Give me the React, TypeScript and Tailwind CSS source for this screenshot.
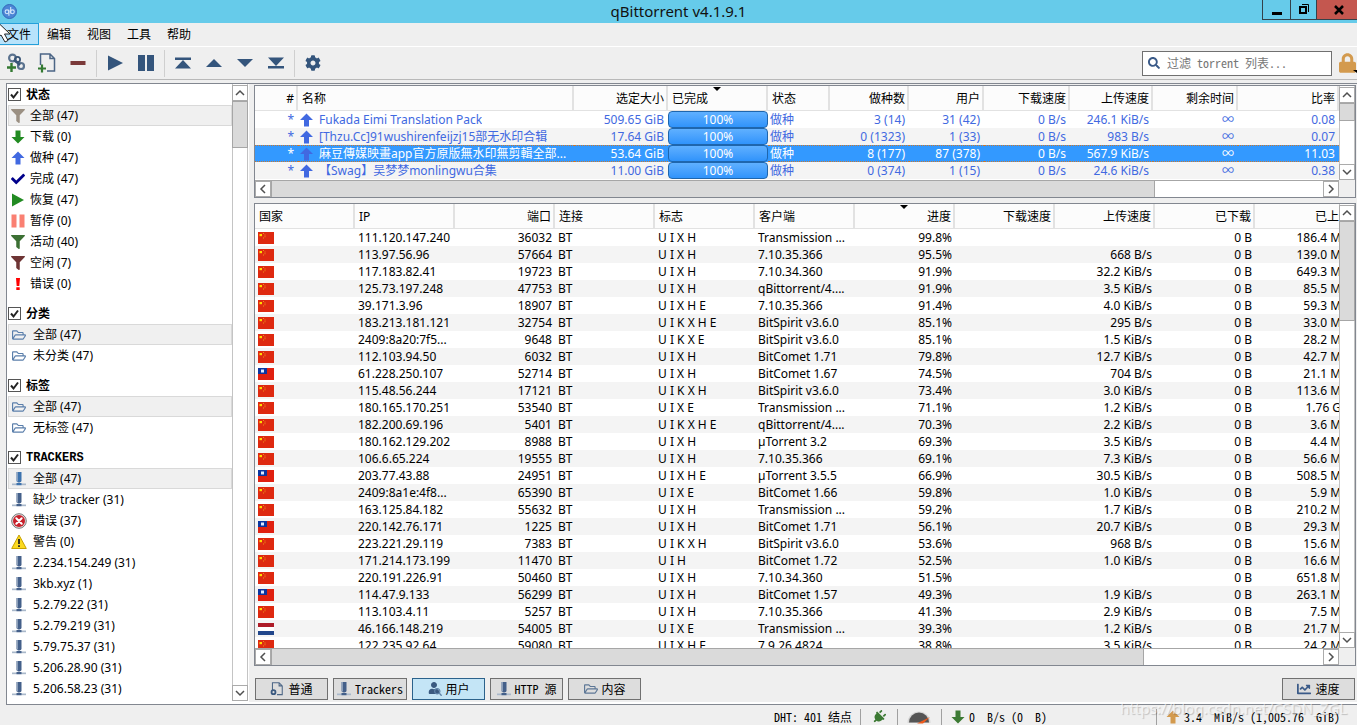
import React from "react";
import { FaCheck, FaCog, FaFilter, FaLock, FaPlug, FaRegFolderOpen, FaSearch, FaUser, FaChartLine } from "react-icons/fa";

const SANS = "font-['Noto_Sans','Noto_Sans_CJK_SC',sans-serif]";
const MONO = "font-['Noto_Sans_Mono_CJK_SC','Liberation_Mono','Noto_Sans_CJK_SC',monospace]";

/* ---------- icons ---------- */

function ArrowIcon({ down = false, className = "" }: { down?: boolean; className?: string }) {
  return (
    <svg viewBox="0 0 13 14" className={"shrink-0 " + className} fill="currentColor" aria-hidden="true">
      {down ? <path d="M4 .5h5V7h4l-6.5 6.5L0 7h4z" /> : <path d="M4 13.5h5V7h4L6.500 .5 0 7h4z" />}
    </svg>
  );
}

function TrackerIcon({ className = "text-[#44608a]" }: { className?: string }) {
  return (
    <svg viewBox="0 0 14 14" className={"h-3.5 w-3.5 shrink-0 " + className} aria-hidden="true">
      <path d="M4.500 0h5v9a2.500 1.500 0 0 1-5 0z" fill="currentColor" />
      <path d="M4.500 0h1.300v9.800L4.500 9z" fill="#9fb0c6" />
      <path d="M6.500 10h1v2h-1z" fill="#8fa2bb" />
      <path d="M0 11.500h14v1.700H0z" fill="#a9b8ca" />
      <path d="M4.500 11h5v2.200h-5z" fill="currentColor" />
    </svg>
  );
}

function PageIcon({ badge }: { badge: "plus" | "gear" }) {
  return (
    <span className="relative block h-full w-full">
      <svg viewBox="0 0 18 20" className="h-full w-full" aria-hidden="true">
        <path d="M2.500 12V1H12l4.500 4.500V18H9M12 1v4.500h4.500" fill="none" stroke="#4c6686" strokeWidth="1.500" />
        {badge === "plus" && <path d="M0 15.500h8M4 11.500v8" stroke="#347a32" strokeWidth="2.200" />}
        {badge === "gear" && <circle cx="4" cy="14.500" r="2.800" fill="none" stroke="#3b5a80" strokeWidth="2.600" />}
      </svg>
    </span>
  );
}

function LinkAddIcon() {
  return (
    <svg viewBox="0 0 18 20" className="h-5 w-[18px]" fill="none" aria-hidden="true">
      <circle cx="5.500" cy="5" r="3.400" stroke="#5b738f" strokeWidth="2.200" />
      <circle cx="14" cy="13" r="3" stroke="#5b738f" strokeWidth="2.200" />
      <circle cx="10.500" cy="6.500" r="2.600" stroke="#3a5677" strokeWidth="1.800" />
      <path d="M7 6.500l6 5.500" stroke="#3a5677" strokeWidth="2.400" />
      <path d="M0 14.500h9M4.500 10v9" stroke="#347a32" strokeWidth="2.400" />
    </svg>
  );
}

function ErrorIcon() {
  return (
    <svg viewBox="0 0 16 16" className="h-4 w-4" aria-hidden="true">
      <circle cx="8" cy="8" r="7.300" fill="#e4e4e4" stroke="#777" />
      <circle cx="8" cy="8" r="6" fill="#c8202a" />
      <path d="M5.300 5.300l5.400 5.400M10.700 5.300l-5.400 5.400" stroke="#fff" strokeWidth="2" strokeLinecap="round" />
    </svg>
  );
}

function WarningIcon() {
  return (
    <svg viewBox="0 0 16 16" className="h-4 w-4" aria-hidden="true">
      <path d="M8 1l7.300 13.500H.7z" fill="#fbd91f" stroke="#c7a100" strokeLinejoin="round" />
      <path d="M8 5v5" stroke="#222" strokeWidth="1.800" />
      <path d="M7.100 11.300h1.800v1.700H7.100z" fill="#222" />
    </svg>
  );
}

function Flag({ code }: { code: string }) {
  if (code === "tw")
    return (
      <svg viewBox="0 0 16 12" className="block h-3 w-4" role="img" aria-label="TW">
        <path d="M0 0h16v12H0z" fill="#e02010" />
        <path d="M0 0h9v6H0z" fill="#0a35a0" />
        <path d="M3 1.500h3v3H3z" fill="#dfe8ff" />
      </svg>
    );
  if (code === "nl")
    return (
      <svg viewBox="0 0 16 12" className="block h-3 w-4" role="img" aria-label="NL">
        <path d="M0 0h16v4H0z" fill="#ae1c28" />
        <path d="M0 4h16v4H0z" fill="#fff" />
        <path d="M0 8h16v4H0z" fill="#21468b" />
      </svg>
    );
  return (
    <svg viewBox="0 0 16 12" className="block h-3 w-4" role="img" aria-label="CN">
      <path d="M0 0h16v12H0z" fill="#de2910" />
      <path d="M1.500 2h2.500v2.200H1.500z" fill="#ffde00" />
      <path d="M5 1h1v1H5zM6.500 2.500h1v1h-1zM6.500 4.300h1v1h-1zM5 5.500h1v1H5z" fill="#f0901a" />
    </svg>
  );
}

/* ---------- scroll bars ---------- */

function ScrollButton({ dir }: { dir: "up" | "down" | "left" | "right" }) {
  const paths = { up: "M4 10l4-4 4 4", down: "M4 6l4 4 4-4", left: "M10 4L6 8l4 4", right: "M6 4l4 4-4 4" };
  return (
    <button type="button" aria-label={"scroll " + dir} className="block h-4 w-4 shrink-0 bg-white outline outline-1 -outline-offset-1 outline-[#ababab]">
      <svg viewBox="0 0 16 16" className="block h-4 w-4" fill="none" stroke="#505050" strokeWidth="1.500">
        <path d={paths[dir]} />
      </svg>
    </button>
  );
}

function VScroll({ thumb }: { thumb: string }) {
  return (
    <div className="flex w-4 shrink-0 flex-col border-x border-[#c4c4c4] bg-white pt-px">
      <div className="-mx-px"><ScrollButton dir="up" /></div>
      <div className="min-h-0 flex-1">
        <div className={"-mx-px border border-[#a6a6a6] bg-[#dadada] " + thumb} />
      </div>
      <div className="-mx-px"><ScrollButton dir="down" /></div>
    </div>
  );
}

function HScroll({ thumb }: { thumb: string }) {
  return (
    <div className="flex h-[17px] shrink-0 bg-[#efefef]">
      <div className="flex min-w-0 flex-1 border-t border-[#a6a6a6] bg-white">
        <ScrollButton dir="left" />
        <div className="min-w-0 flex-1">
          <div className={"h-4 border-x border-[#a6a6a6] bg-[#dadada] " + thumb} />
        </div>
        <ScrollButton dir="right" />
      </div>
      <div className="w-4" />
    </div>
  );
}

/* ---------- sidebar ---------- */

type SideItem = { icon: React.ReactNode; text: string };

const folder = <FaRegFolderOpen className="h-3.5 w-3.5 text-[#5b7fab]" />;

const statusItems: SideItem[] = [
  { icon: <FaFilter className="h-3.5 w-3.5 text-[#9b9083]" />, text: "全部 (47)" },
  { icon: <ArrowIcon down className="h-3.5 w-3.5 text-[#228b22]" />, text: "下载 (0)" },
  { icon: <ArrowIcon className="h-3.5 w-3.5 text-[#4169e1]" />, text: "做种 (47)" },
  { icon: <FaCheck className="h-3.5 w-3.5 text-[#00008b]" />, text: "完成 (47)" },
  {
    icon: <svg viewBox="0 0 14 14" className="h-3.5 w-3.5"><path d="M1 .5L13 7 1 13.500z" fill="#228b22" /></svg>,
    text: "恢复 (47)",
  },
  {
    icon: <svg viewBox="0 0 14 14" className="h-3.5 w-3.5"><path d="M.5 .5h5v13h-5zM8.500 .5h5v13h-5z" fill="#fa8072" /></svg>,
    text: "暂停 (0)",
  },
  { icon: <FaFilter className="h-3.5 w-3.5 text-[#3c7034]" />, text: "活动 (40)" },
  { icon: <FaFilter className="h-3.5 w-3.5 text-[#6e3434]" />, text: "空闲 (7)" },
  {
    icon: <svg viewBox="0 0 14 14" className="h-3.5 w-3.5"><path d="M5 1h4l-.7 8H5.700zM5.300 10.300h3.400V13H5.300z" fill="#f00" /></svg>,
    text: "错误 (0)",
  },
];

const categoryItems: SideItem[] = [
  { icon: folder, text: "全部 (47)" },
  { icon: folder, text: "未分类 (47)" },
];

const tagItems: SideItem[] = [
  { icon: folder, text: "全部 (47)" },
  { icon: folder, text: "无标签 (47)" },
];

const trackerItems: SideItem[] = [
  { icon: <TrackerIcon className="text-[#3d73ae]" />, text: "全部 (47)" },
  { icon: <TrackerIcon />, text: "缺少 tracker (31)" },
  { icon: <ErrorIcon />, text: "错误 (37)" },
  { icon: <WarningIcon />, text: "警告 (0)" },
  ...["2.234.154.249 (31)", "3kb.xyz (1)", "5.2.79.22 (31)", "5.2.79.219 (31)", "5.79.75.37 (31)", "5.206.28.90 (31)", "5.206.58.23 (31)"].map(
    (text) => ({ icon: <TrackerIcon />, text })
  ),
];

function SideGroup({ title, items, wide = false, mono = false }: { title: string; items: SideItem[]; wide?: boolean; mono?: boolean }) {
  return (
    <section className="mb-[9px]">
      <label className={"flex h-[21px] items-center gap-[5px] text-xs font-bold " + (mono ? "font-['Liberation_Mono',monospace]" : SANS)}>
        <span className="relative h-[13px] w-[13px]">
          <input type="checkbox" defaultChecked className="peer block h-[13px] w-[13px] appearance-none border border-[#555] bg-white" />
          <svg viewBox="0 0 13 13" className="pointer-events-none absolute inset-0 hidden peer-checked:block" fill="none" stroke="#222" strokeWidth="2">
            <path d="M3 6.500l2.500 3L10 3.500" />
          </svg>
        </span>
        {title}
      </label>
      <ul>
        {items.map((item, i) => (
          <li key={item.text}>
            <button
              type="button"
              className={
                "flex h-[21px] w-full items-center border text-left text-xs " +
                (wide ? "gap-[5px] pl-px " : "gap-1 ") +
                (i === 0 ? "border-[#d9d9d9] bg-[#f0f0f0]" : "border-transparent")
              }
            >
              <span className={"flex h-4 items-center justify-center " + (wide ? "w-[18px]" : "w-[17px]")}>{item.icon}</span>
              {item.text}
            </button>
          </li>
        ))}
      </ul>
    </section>
  );
}

function Sidebar() {
  return (
    <aside className="flex w-[243px] shrink-0 border-l border-[#828790] bg-white pb-[3px]">
      <div className="min-w-0 flex-1 overflow-hidden pl-px">
        <SideGroup title="状态" items={statusItems} />
        <SideGroup title="分类" items={categoryItems} wide />
        <SideGroup title="标签" items={tagItems} wide />
        <SideGroup title="TRACKERS" items={trackerItems} wide mono />
      </div>
      <VScroll thumb="h-[47px]" />
      <div className="w-px" />
    </aside>
  );
}

/* ---------- torrent table ---------- */

type Column = { title: string; width: string; left?: boolean; sorted?: boolean };

function HeaderRow({ columns }: { columns: Column[] }) {
  return (
    <>
      <colgroup>
        {columns.map((c) => (
          <col key={c.title} className={c.width} />
        ))}
      </colgroup>
      <thead>
        <tr>
          {columns.map((c) => (
            <th
              key={c.title}
              className={
                "relative h-[25px] overflow-hidden border-r-2 border-b border-[#e2e2e2] bg-[#fcfcfc] p-0 pt-0.5 pr-0.5 pl-1 font-normal whitespace-nowrap " +
                (c.left ? "text-left" : "text-right")
              }
            >
              {c.title}
              {c.sorted && (
                <svg viewBox="0 0 8 4" className="absolute top-px left-1/2 h-1 w-2 -translate-x-1/2">
                  <path d="M0 0h8L4 4z" />
                </svg>
              )}
            </th>
          ))}
        </tr>
      </thead>
    </>
  );
}

const torrentColumns: Column[] = [
  { title: "#", width: "w-[43px]" },
  { title: "名称", width: "w-auto", left: true },
  { title: "选定大小", width: "w-[94px]" },
  { title: "已完成", width: "w-[100px]", left: true, sorted: true },
  { title: "状态", width: "w-[62px]", left: true },
  { title: "做种数", width: "w-[79px]" },
  { title: "用户", width: "w-[75px]" },
  { title: "下载速度", width: "w-[86px]" },
  { title: "上传速度", width: "w-[83px]" },
  { title: "剩余时间", width: "w-[85px]" },
  { title: "比率", width: "w-[101px]" },
];

const torrents = [
  ["Fukada Eimi Translation Pack", "509.65 GiB", "3 (14)", "31 (42)", "246.1 KiB/s", "0.08"],
  ["[Thzu.Cc]91wushirenfeijzj15部无水印合辑", "17.64 GiB", "0 (1323)", "1 (33)", "983 B/s", "0.07"],
  ["麻豆傳媒映畫app官方原版無水印無剪輯全部...", "53.64 GiB", "8 (177)", "87 (378)", "567.9 KiB/s", "11.03"],
  ["【Swag】吴梦梦monlingwu合集", "11.00 GiB", "0 (374)", "1 (15)", "24.6 KiB/s", "0.38"],
];

function TorrentTable() {
  return (
    <div className="flex shrink-0 flex-col border border-[#828790] bg-white">
      <div className="flex h-[94px]">
        <div className="min-w-0 flex-1 overflow-hidden">
          <table className="w-full table-fixed border-separate border-spacing-0 text-xs leading-4">
            <HeaderRow columns={torrentColumns} />
            <tbody>
              {torrents.map(([name, size, seeds, peers, up, ratio], i) => {
                const selected = i === 2;
                const cell = "h-[17px] p-0 pr-1 pl-0.5 text-right whitespace-nowrap " + (selected ? "border-y border-dotted border-[#c87830] leading-[15px]" : "leading-[17px]");
                return (
                  <tr key={name} className={selected ? "bg-[#3399ff] text-white" : i % 2 ? "bg-[#f4f4f4] text-[#4169e1]" : "text-[#4169e1]"}>
                    <td className={cell}>*</td>
                    <td className={cell}>
                      <span className="flex items-center gap-1.5">
                        <ArrowIcon className="h-3.5 w-[13px] -my-1 text-[#4169e1]" />
                        <span className="overflow-hidden">{name}</span>
                      </span>
                    </td>
                    <td className={cell}>{size}</td>
                    <td className="h-[17px] p-0">
                      <div className="h-[17px] rounded-sm border border-[#1f66ad] bg-linear-to-b from-[#5fb0ff] to-[#2f93fb] text-center leading-[15px] text-white">100%</div>
                    </td>
                    <td className={cell}><span className="block text-left">做种</span></td>
                    <td className={cell}>{seeds}</td>
                    <td className={cell}>{peers}</td>
                    <td className={cell}>0 B/s</td>
                    <td className={cell}>{up}</td>
                    <td className={cell}>∞</td>
                    <td className={cell}>{ratio}</td>
                  </tr>
                );
              })}
            </tbody>
          </table>
        </div>
        <VScroll thumb="h-[18px]" />
      </div>
      <HScroll thumb="w-[84%]" />
    </div>
  );
}

/* ---------- peer table ---------- */

const peerColumns: Column[] = [
  { title: "国家", width: "w-[100px]", left: true },
  { title: "IP", width: "w-[100px]", left: true },
  { title: "端口", width: "w-[100px]" },
  { title: "连接", width: "w-[100px]", left: true },
  { title: "标志", width: "w-[100px]", left: true },
  { title: "客户端", width: "w-[100px]", left: true },
  { title: "进度", width: "w-[100px]", sorted: true },
  { title: "下载速度", width: "w-[100px]" },
  { title: "上传速度", width: "w-[100px]" },
  { title: "已下载", width: "w-[100px]" },
  { title: "已上传", width: "w-[100px]" },
];

const peers = [
  ["cn", "111.120.147.240", "36032", "U I X H", "Transmission ...", "99.8%", "", "186.4 MiB"],
  ["cn", "113.97.56.96", "57664", "U I X H", "7.10.35.366", "95.5%", "668 B/s", "139.0 MiB"],
  ["cn", "117.183.82.41", "19723", "U I X H", "7.10.34.360", "91.9%", "32.2 KiB/s", "649.3 MiB"],
  ["cn", "125.73.197.248", "47753", "U I X H", "qBittorrent/4....", "91.9%", "3.5 KiB/s", "85.5 MiB"],
  ["cn", "39.171.3.96", "18907", "U I X H E", "7.10.35.366", "91.4%", "4.0 KiB/s", "59.3 MiB"],
  ["cn", "183.213.181.121", "32754", "U I K X H E", "BitSpirit v3.6.0", "85.1%", "295 B/s", "33.0 MiB"],
  ["cn", "2409:8a20:7f5...", "9648", "U I K X E", "BitSpirit v3.6.0", "85.1%", "1.5 KiB/s", "28.2 MiB"],
  ["cn", "112.103.94.50", "6032", "U I X H", "BitComet 1.71", "79.8%", "12.7 KiB/s", "42.7 MiB"],
  ["tw", "61.228.250.107", "52714", "U I X H", "BitComet 1.67", "74.5%", "704 B/s", "21.1 MiB"],
  ["cn", "115.48.56.244", "17121", "U I K X H", "BitSpirit v3.6.0", "73.4%", "3.0 KiB/s", "113.6 MiB"],
  ["cn", "180.165.170.251", "53540", "U I X E", "Transmission ...", "71.1%", "1.2 KiB/s", "1.76 GiB"],
  ["cn", "182.200.69.196", "5401", "U I K X H E", "qBittorrent/4....", "70.3%", "2.2 KiB/s", "3.6 MiB"],
  ["cn", "180.162.129.202", "8988", "U I X H", "µTorrent 3.2", "69.3%", "3.5 KiB/s", "4.4 MiB"],
  ["cn", "106.6.65.224", "19555", "U I X H", "7.10.35.366", "69.1%", "7.3 KiB/s", "56.6 MiB"],
  ["tw", "203.77.43.88", "24951", "U I X H E", "µTorrent 3.5.5", "66.9%", "30.5 KiB/s", "508.5 MiB"],
  ["cn", "2409:8a1e:4f8...", "65390", "U I X E", "BitComet 1.66", "59.8%", "1.0 KiB/s", "5.9 MiB"],
  ["cn", "163.125.84.182", "55632", "U I X H", "Transmission ...", "59.2%", "1.7 KiB/s", "210.2 MiB"],
  ["tw", "220.142.76.171", "1225", "U I X H", "BitComet 1.71", "56.1%", "20.7 KiB/s", "29.3 MiB"],
  ["cn", "223.221.29.119", "7383", "U I K X H", "BitSpirit v3.6.0", "53.6%", "968 B/s", "15.6 MiB"],
  ["cn", "171.214.173.199", "11470", "U I H", "BitComet 1.72", "52.5%", "1.0 KiB/s", "16.6 MiB"],
  ["cn", "220.191.226.91", "50460", "U I X H", "7.10.34.360", "51.5%", "", "651.8 MiB"],
  ["tw", "114.47.9.133", "56299", "U I X H", "BitComet 1.57", "49.3%", "1.9 KiB/s", "263.1 MiB"],
  ["cn", "113.103.4.11", "5257", "U I X H", "7.10.35.366", "41.3%", "2.9 KiB/s", "7.5 MiB"],
  ["nl", "46.166.148.219", "54005", "U I X E", "Transmission ...", "39.3%", "1.2 KiB/s", "21.7 MiB"],
  ["cn", "122.235.92.64", "59080", "U I X H E", "7.9.26.4824", "38.8%", "3.5 KiB/s", "24.2 MiB"],
];

function PeerTable() {
  const cell = "h-[17px] p-0 px-[3px] leading-[17px] whitespace-nowrap";
  return (
    <div className="flex min-h-0 flex-1 flex-col border border-[#828790] bg-white">
      <div className="flex min-h-0 flex-1">
        <div className="min-w-0 flex-1 overflow-hidden">
          <table className="w-[1100px] table-fixed border-separate border-spacing-0 text-xs leading-4">
            <HeaderRow columns={peerColumns} />
            <tbody>
              {peers.map(([flag, ip, port, flags, client, progress, up, uploaded], i) => (
                <tr key={ip} className={i % 2 ? "bg-[#f4f4f4]" : ""}>
                  <td className={cell}><Flag code={flag} /></td>
                  <td className={cell}>{ip}</td>
                  <td className={cell + " text-right"}>{port}</td>
                  <td className={cell}>BT</td>
                  <td className={cell}>{flags}</td>
                  <td className={cell}>{client}</td>
                  <td className={cell + " text-right"}>{progress}</td>
                  <td className={cell} />
                  <td className={cell + " text-right"}>{up}</td>
                  <td className={cell + " text-right"}>0 B</td>
                  <td className={cell + " text-right"}>{uploaded}</td>
                </tr>
              ))}
            </tbody>
          </table>
        </div>
        <VScroll thumb="h-[100px]" />
      </div>
      <HScroll thumb="w-[83%]" />
    </div>
  );
}

/* ---------- frame ---------- */

function TabButton({ icon, children, active = false }: { icon: React.ReactNode; children: React.ReactNode; active?: boolean }) {
  return (
    <button
      type="button"
      className={
        "flex h-[22px] min-w-[73px] items-center justify-center gap-1 border px-[3px] text-xs whitespace-nowrap " +
        MONO +
        (active ? " border-[#2c628b] bg-[#c4e5f6]" : " border-[#707070] bg-[#dddddd]")
      }
    >
      <span className="flex h-3.5 w-3.5 shrink-0 items-center justify-center">{icon}</span>
      {children}
    </button>
  );
}

function ToolButton({ label, children }: { label: string; children: React.ReactNode }) {
  return (
    <button type="button" aria-label={label} title={label} className="flex h-6 w-[31px] items-center justify-center text-[#34557c]">
      {children}
    </button>
  );
}

function Glyph({ d }: { d: string }) {
  return (
    <svg viewBox="0 0 16 16" className="h-4 w-4" fill="currentColor" aria-hidden="true">
      <path d={d} />
    </svg>
  );
}

function TitleBar() {
  return (
    <header className="flex h-[23px] shrink-0 items-start bg-[#66cbea]">
      <div className="flex h-[22px] w-[95px] items-center pl-0.5">
        <svg viewBox="0 0 15 15" className="h-[15px] w-[15px]" aria-hidden="true">
          <circle cx="7.500" cy="7.500" r="7" fill="#4c86d6" stroke="#3568b8" />
          <circle cx="5" cy="7.800" r="1.900" fill="none" stroke="#d5e6fb" strokeWidth="1.100" />
          <path d="M6.900 5.800v6M8.700 3v6.500" stroke="#d5e6fb" strokeWidth="1.100" />
          <circle cx="10.400" cy="7.800" r="1.900" fill="none" stroke="#d5e6fb" strokeWidth="1.100" />
        </svg>
      </div>
      <h1 className="flex-1 text-center text-[15px] leading-[23px] text-[#111]">qBittorrent v4.1.9.1</h1>
      <div className="flex h-5 border-b border-l border-[#33424a]">
        <button type="button" aria-label="minimize" className="flex w-7 items-center justify-center border-r border-[#33424a]">
          <svg viewBox="0 0 16 16" className="h-4 w-4"><path d="M3 10h10v3H3z" /></svg>
        </button>
        <button type="button" aria-label="restore" className="flex w-[26px] items-center justify-center border-r border-[#33424a]">
          <svg viewBox="0 0 16 16" className="h-4 w-4" fill="none" stroke="#000">
            <path d="M4 5h6v6H4z" strokeWidth="2" />
            <path d="M6 2.500h6.500V10" />
          </svg>
        </button>
        <button type="button" aria-label="close" className="flex w-10 items-center justify-center bg-[#c4574f] pl-1">
          <svg viewBox="0 0 16 16" className="h-4 w-4" stroke="#000" strokeWidth="2.500"><path d="M4 4l8 8M12 4l-8 8" /></svg>
        </button>
      </div>
    </header>
  );
}

function ToolBar() {
  const sep = <div className="h-[27px] w-px bg-[#cfcfcf]" />;
  return (
    <div className="flex h-[34px] shrink-0 items-center border-t border-white border-b border-b-[#b9b9b9]">
      <ToolButton label="添加链接"><LinkAddIcon /></ToolButton>
      <ToolButton label="添加文件"><span className="block h-5 w-[18px]"><PageIcon badge="plus" /></span></ToolButton>
      <ToolButton label="删除"><span className="text-[#7b3a3a]"><Glyph d="M.5 6h15v4H.5z" /></span></ToolButton>
      <div className="w-[3px]" />
      {sep}
      <div className="w-0.5" />
      <ToolButton label="恢复"><Glyph d="M1 .5L16 8 1 15.500z" /></ToolButton>
      <ToolButton label="暂停"><Glyph d="M0 0h7v16H0zM9 0h7v16H9z" /></ToolButton>
      <div className="w-[3px]" />
      {sep}
      <div className="w-0.5" />
      <ToolButton label="置顶"><Glyph d="M0 2.500h16V5H0zM8 5l8 8.500H0z" /></ToolButton>
      <ToolButton label="上移"><Glyph d="M8 4l8 8H0z" /></ToolButton>
      <ToolButton label="下移"><Glyph d="M0 4h16l-8 8z" /></ToolButton>
      <ToolButton label="置底"><Glyph d="M0 2.500h16L8 11zM0 11h16v2.500H0z" /></ToolButton>
      <div className="w-[3px]" />
      {sep}
      <div className="w-0.5" />
      <ToolButton label="选项"><FaCog className="h-4 w-4" /></ToolButton>
      <label className="ml-auto flex h-[25px] w-[190px] items-center gap-[7px] border border-[#707070] bg-white px-[5px]">
        <FaSearch className="h-3 w-3 shrink-0 text-[#3a5a88]" />
        <input type="text" aria-label="过滤 torrent 列表" placeholder="过滤 torrent 列表..." className={"min-w-0 flex-1 bg-transparent text-xs outline-none placeholder:text-[#777] " + MONO} />
      </label>
      <button type="button" aria-label="锁定" className="relative ml-[7px] flex w-[18px] text-[#d39a4e]">
        <FaLock className="h-5 w-[17px]" />
        <svg viewBox="0 0 4 3" className="absolute right-0 bottom-0 h-[3px] w-1"><path d="M0 0h4v3z" fill="#000" /></svg>
      </button>
    </div>
  );
}

function StatusBar() {
  const sep = <div className="h-4 w-px bg-[#a0a0a0]" />;
  return (
    <footer className={"flex h-5 shrink-0 items-center pt-1 pr-[17px] text-xs whitespace-pre " + MONO}>
      <span className="ml-auto">DHT: 401 结点</span>
      <div className="w-2" />
      {sep}
      <div className="flex w-9 justify-center text-[#3c7a34]"><FaPlug className="h-3.5 w-3.5 rotate-45" /></div>
      {sep}
      <div className="flex w-[43px] justify-center">
        <svg viewBox="0 0 24 13" className="h-[13px] w-6" aria-hidden="true">
          <path d="M.5 12a11.500 11.500 0 0 1 23 0z" fill="#d8d8d8" />
          <path d="M2 11.500a10 10 0 0 1 20 0z" fill="#555" />
          <path d="M10 12.500L23 6l-7 6.500z" fill="#ee5a1c" />
        </svg>
      </div>
      {sep}
      <button type="button" className="flex w-[214px] items-center gap-1 pl-[9px]">
        <ArrowIcon down className="h-3.5 w-[14px] text-[#3c7a34]" />0  B/s (0  B)
      </button>
      {sep}
      <button type="button" className="flex items-center gap-1 pl-[9px]">
        <ArrowIcon className="h-3.5 w-[14px] text-[#d39a4e]" />3.4  MiB/s (1,005.76  GiB)
      </button>
    </footer>
  );
}

export default function App() {
  return (
    <div className={"relative flex h-screen flex-col overflow-hidden bg-[#efefef] text-xs text-black " + SANS}>
      <TitleBar />
      <nav className="flex h-[23px] shrink-0 items-start text-xs">
        <button type="button" className="h-[22px] w-[39px] border border-l-0 border-[#26a0da] bg-[#b8e3fb] pt-0.5">文件</button>
        {["编辑", "视图", "工具", "帮助"].map((m) => (
          <button key={m} type="button" className="h-[22px] w-10 pt-0.5">{m}</button>
        ))}
      </nav>
      <ToolBar />
      <div className="mt-[3px] ml-1.5 flex min-h-0 flex-1 border-y border-[#828790]">
        <Sidebar />
        <div className="flex min-w-0 flex-1 flex-col bg-[#efefef]">
          <div className="flex min-h-0 flex-1 flex-col gap-[5px] pt-px pr-px pl-[5px]">
            <TorrentTable />
            <PeerTable />
          </div>
          <div className="flex shrink-0 justify-between border-b-2 border-white pt-3 pr-0.5 pb-0.5 pl-1.5">
            <div className="flex gap-[5px]">
              <TabButton icon={<PageIcon badge="gear" />}>普通</TabButton>
              <TabButton icon={<TrackerIcon />}>Trackers</TabButton>
              <TabButton
                active
                icon={
                  <span className="relative block h-3.5 w-3.5 text-[#3a5a80]">
                    <FaUser className="h-3 w-3" />
                    <FaSearch className="absolute right-0 bottom-0 h-2 w-2 text-[#5f83a8]" />
                  </span>
                }
              >
                用户
              </TabButton>
              <TabButton icon={<TrackerIcon />}>HTTP 源</TabButton>
              <TabButton icon={<FaRegFolderOpen className="h-3.5 w-3.5 text-[#5d7796]" />}>内容</TabButton>
            </div>
            <TabButton icon={<FaChartLine className="h-3.5 w-3.5 text-[#3a5a88]" />}>速度</TabButton>
          </div>
        </div>
      </div>
      <StatusBar />
      <svg viewBox="0 0 12 21" className="pointer-events-none absolute top-[22px] left-0 h-[21px] w-3" aria-hidden="true">
        <path d="M-2 .5L-2 15 1 13l4 7 3-1.500L4.500 12H10z" fill="#fff" stroke="#222" />
      </svg>
      <div className="pointer-events-none absolute right-2.5 bottom-1.5 text-[15px] leading-[22px] text-white/60 [text-shadow:1px_1px_1px_rgba(0,0,0,0.2)]">
        https://blog.csdn.net/CSDN_ZGL
      </div>
    </div>
  );
}
